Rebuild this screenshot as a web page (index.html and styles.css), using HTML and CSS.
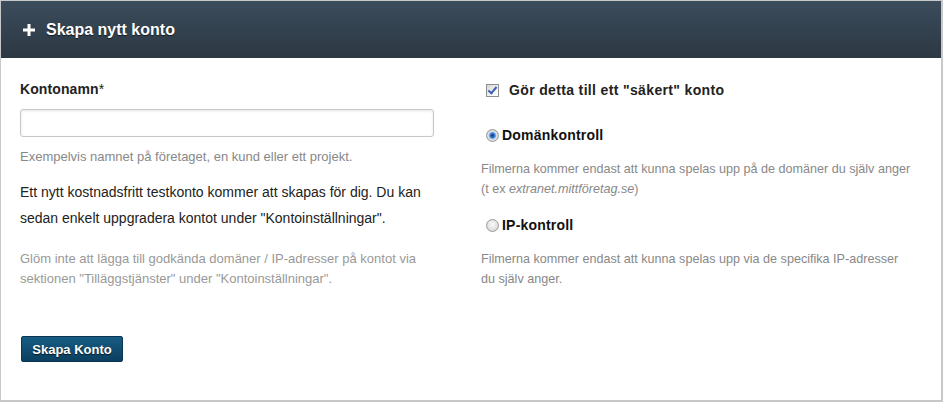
FILE: index.html
```html
<!DOCTYPE html>
<html lang="sv">
<head>
    <meta charset="UTF-8">
    <title>Skapa nytt konto</title>
    <link rel="stylesheet" href="styles.css">
</head>
<body>
    <div class="panel">
        <div class="panel-header">
            <span class="plus">
                <svg width="12" height="12" viewBox="0 0 12 12"><path d="M4.5 0h3v4.5H12v3H7.5V12h-3V7.5H0v-3h4.5z" fill="#fff"/></svg>
            </span>
            <h1>Skapa nytt konto</h1>
        </div>

        <form class="panel-body">
            <div class="columns">
                <div class="col">
                    <label class="field-label" for="account-name">Kontonamn<span class="req">*</span></label>
                    <input type="text" id="account-name" class="text-input">
                    <p class="hint">Exempelvis namnet på företaget, en kund eller ett projekt.</p>
                    <p class="info">Ett nytt kostnadsfritt testkonto kommer att skapas för dig. Du kan sedan enkelt uppgradera kontot under "Kontoinställningar".</p>
                    <p class="note">Glöm inte att lägga till godkända domäner / IP-adresser på kontot via sektionen "Tilläggstjänster" under "Kontoinställningar".</p>
                </div>

                <div class="col">
                    <label class="check-row">
                        <input type="checkbox" checked>
                        <span>Gör detta till ett "säkert" konto</span>
                    </label>

                    <label class="radio-row first">
                        <input type="radio" name="control" checked>
                        <span>Domänkontroll</span>
                    </label>
                    <p class="desc">Filmerna kommer endast att kunna spelas upp på de domäner du själv anger<br>(t ex <em>extranet.mittföretag.se</em>)</p>

                    <label class="radio-row">
                        <input type="radio" name="control">
                        <span>IP-kontroll</span>
                    </label>
                    <p class="desc">Filmerna kommer endast att kunna spelas upp via de specifika IP-adresser<br>du själv anger.</p>
                </div>
            </div>

            <button type="button" class="submit-button">Skapa Konto</button>
        </form>
    </div>
</body>
</html>
```

FILE: styles.css
```css
body {
    margin: 0;
    font-family: "Liberation Sans", Arial, sans-serif;
    background: #ffffff;
    color: #222;
}

.panel {
    width: 940px;
    height: 399px;
    border: 1px solid #c8c8c8;
    border-right-width: 2px;
    border-bottom-width: 2px;
    background: #fff;
}

.panel-header {
    height: 57px;
    display: flex;
    align-items: center;
    padding-left: 22px;
    background: linear-gradient(#3b4c5b, #2c3843);
}

.plus {
    display: flex;
    margin-right: 11px;
}

.panel-header h1 {
    margin: 0;
    font-size: 16px;
    font-weight: bold;
    color: #fff;
    text-shadow: 0 1px 1px rgba(0, 0, 0, 0.6);
}

.panel-body {
    padding: 22px 19px 0 19px;
}

.columns {
    display: grid;
    grid-template-columns: 441px 441px;
    column-gap: 20px;
}

.field-label {
    display: block;
    font-size: 14px;
    font-weight: bold;
    color: #222;
    line-height: 18px;
    letter-spacing: 0.1px;
}

.req {
    font-weight: normal;
}

.text-input {
    display: block;
    box-sizing: border-box;
    width: 414px;
    height: 28px;
    margin-top: 11px;
    border: 1px solid #c6c6c6;
    border-radius: 3px;
    box-shadow: inset 0 1px 3px rgba(0, 0, 0, 0.1);
}

.hint {
    margin: 11px 0 0 0;
    font-size: 13px;
    line-height: 18px;
    color: #888;
}

.info {
    margin: 13px 0 0 0;
    font-size: 14px;
    line-height: 26px;
    color: #222;
}

.note {
    margin: 18px 0 0 0;
    font-size: 13px;
    line-height: 20px;
    color: #999;
}

.check-row {
    display: flex;
    align-items: center;
    margin-top: 2px;
    padding-left: 5px;
    font-size: 14px;
    font-weight: bold;
    letter-spacing: 0.35px;
    color: #222;
}

.check-row input,
.radio-row input {
    appearance: none;
    -webkit-appearance: none;
    box-sizing: border-box;
    width: 13px;
    height: 13px;
    margin: 0;
    flex: none;
    position: relative;
}

.check-row input {
    margin-right: 10px;
    border: 1px solid #8e8f8f;
    background: linear-gradient(135deg, #d6d6d6, #f7f7f7 70%, #fff);
}

/* the tick drawn with two borders */
.check-row input:checked::after {
    content: "";
    position: absolute;
    left: 3px;
    top: 0px;
    width: 3px;
    height: 7px;
    border: solid #3d5fb5;
    border-width: 0 2px 2px 0;
    transform: rotate(40deg);
}

.radio-row {
    display: flex;
    align-items: center;
    padding-left: 5px;
    margin-top: 18px;
    font-size: 14px;
    font-weight: bold;
    letter-spacing: 0.2px;
    color: #111;
}

.radio-row.first {
    margin-top: 29px;
}

.radio-row input {
    margin-right: 3px;
    border-radius: 50%;
    border: 1px solid #9a9a9a;
    background: radial-gradient(circle at 50% 40%, #fafafa, #cfcfcf);
}

.radio-row input:checked {
    background: radial-gradient(circle, #12306a 0, #2f6fcc 2px, #8fbdf0 3.5px, #e4e4e4 4.2px, #c9c9c9 6px);
}

.desc {
    margin: 16px 0 0 0;
    font-size: 12.6px;
    line-height: 20px;
    color: #888;
    white-space: nowrap;
}

.submit-button {
    margin-top: 47px;
    margin-left: 1px;
    width: 102px;
    height: 26px;
    border: 1px solid #0a344f;
    border-radius: 2px;
    background: linear-gradient(#175c84, #0b3f60);
    color: #fff;
    font-family: "Liberation Sans", Arial, sans-serif;
    font-size: 13px;
    font-weight: bold;
    text-shadow: 0 1px 1px rgba(0, 0, 0, 0.7);
    cursor: pointer;
}
```
